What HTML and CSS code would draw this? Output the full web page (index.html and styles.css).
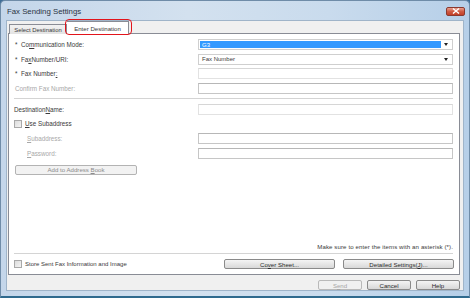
FILE: index.html
```html
<!DOCTYPE html>
<html lang="en">

<head>
    <meta charset="UTF-8">
    <title>Fax Sending Settings</title>
    <link rel="stylesheet" href="styles.css">
</head>

<body>
    <div class="window">
        <div class="titlebar">
            <span class="title">Fax Sending Settings</span>
            <span class="close-btn">
                <svg width="8" height="6" viewBox="0 0 8 6">
                    <path d="M1 0.5 L7 5.5 M7 0.5 L1 5.5" stroke="#fff" stroke-width="1.4" />
                </svg>
            </span>
        </div>

        <div class="client">
            <div class="tabs">
                <div class="tab">Select Destination</div>
                <div class="tab active">Enter Destination</div>
                <div class="highlight"></div>
            </div>

            <div class="panel">
                <div class="row">
                    <label class="label"><span class="star">*</span>Co<u>m</u>munication Mode:</label>
                    <div class="combo selected">
                        <span class="combo-value">G3</span>
                        <span class="arrow"></span>
                    </div>
                </div>
                <div class="row">
                    <label class="label"><span class="star">*</span>Fa<u>x</u> Number/URI:</label>
                    <div class="combo">
                        <span class="combo-value">Fax Number</span>
                        <span class="arrow"></span>
                    </div>
                </div>
                <div class="row">
                    <label class="label"><span class="star">*</span>Fax Number<u>:</u></label>
                    <div class="textbox faint"></div>
                </div>
                <div class="row">
                    <label class="label disabled">Confirm Fax Number:</label>
                    <div class="textbox"></div>
                </div>

                <div class="separator"></div>

                <div class="row">
                    <label class="label plain">Destination <u>N</u>ame:</label>
                    <div class="textbox faint"></div>
                </div>
                <div class="check-row">
                    <span class="checkbox"></span>
                    <span><u>U</u>se Subaddress</span>
                </div>
                <div class="row">
                    <label class="label disabled indent"><u>S</u>ubaddress:</label>
                    <div class="textbox"></div>
                </div>
                <div class="row">
                    <label class="label disabled indent"><u>P</u>assword:</label>
                    <div class="textbox"></div>
                </div>
                <button class="btn add-btn">Add to Address <u>B</u>ook</button>

                <div class="spacer"></div>

                <p class="note">Make sure to enter the items with an asterisk (*).</p>
                <div class="separator bottom"></div>

                <div class="panel-foot">
                    <div class="check-row">
                        <span class="checkbox"></span>
                        <span>Store Sent Fax Information and Image</span>
                    </div>
                    <button class="btn wide">Co<u>v</u>er Sheet...</button>
                    <button class="btn wide">Detailed Settings(<u>J</u>)...</button>
                </div>
            </div>

            <div class="footer">
                <button class="btn small" disabled>S<u>e</u>nd</button>
                <button class="btn small">Cancel</button>
                <button class="btn small">Help</button>
            </div>
        </div>
    </div>
</body>

</html>
```

FILE: styles.css
```css
* {
    margin: 0;
    padding: 0;
    box-sizing: border-box;
}

body {
    width: 470px;
    height: 298px;
    overflow: hidden;
    font-family: "Liberation Sans", Arial, sans-serif;
    font-size: 6.3px;
    color: #3a3a3a;
    background: #3f6e98;
}

.window {
    width: 470px;
    height: 298px;
    display: flex;
    flex-direction: column;
    background: linear-gradient(90deg, #c4d6ea, #d3e1ef 40%, #c9dbed 70%, #b6cfe8);
    border: 1px solid #6f8ca8;
    border-bottom: 2px solid #2f6a8e;
    border-radius: 5px 5px 0 0;
}

/* title bar */
.titlebar {
    height: 19px;
    display: flex;
    align-items: center;
    justify-content: space-between;
    padding: 1px 4px 0 6px;
}

.title {
    font-size: 7.8px;
    color: #2a3442;
}

.close-btn {
    width: 19px;
    height: 9px;
    display: flex;
    align-items: center;
    justify-content: center;
    border: 1px solid #8a3a30;
    border-radius: 2px;
    background: linear-gradient(#e8a08f, #cf5a43 50%, #c24028);
}

/* client area */
.client {
    flex: 1;
    margin: 0 5px 5px;
    background: #f0f0f0;
    border: 1px solid #9fb4c9;
    display: flex;
    flex-direction: column;
    padding: 0 3px 0 1px;
}

.tabs {
    position: relative;
    height: 13px;
    display: flex;
    align-items: flex-end;
    padding-left: 1px;
    margin-bottom: -1px;
    z-index: 2;
}

.tab {
    width: 58px;
    height: 10px;
    display: flex;
    align-items: center;
    justify-content: center;
    border: 1px solid #898c95;
    border-bottom: none;
    background: linear-gradient(#f2f2f2, #e3e3e3);
    font-size: 5.9px;
    white-space: nowrap;
}

.tab.active {
    width: 62px;
    height: 13px;
    background: #fff;
    border-left: none;
    font-size: 6.1px;
}

/* red annotation ring around the active tab */
.highlight {
    position: absolute;
    left: 57px;
    top: -2px;
    width: 67px;
    height: 16px;
    border: 1.5px solid #e2141b;
    border-radius: 4px;
}

.panel {
    height: 242px;
    background: #fff;
    border: 1px solid #898c95;
    display: flex;
    flex-direction: column;
    padding: 5px 5px 0 5px;
}

.row {
    display: flex;
    align-items: center;
    height: 11px;
    margin-bottom: 3.7px;
}

.label {
    width: 184px;
    padding-left: 1px;
    display: flex;
    align-items: center;
}

.label.plain {
    padding-left: 0;
}

.label.indent {
    padding-left: 13px;
}

.star {
    width: 6px;
}

.disabled {
    color: #a8a8a8;
}

.combo {
    width: 255px;
    height: 11px;
    border: 1px solid #cfcfcf;
    display: flex;
    align-items: center;
    padding: 1px;
}

.combo-value {
    flex: 1;
    height: 100%;
    display: flex;
    align-items: center;
    padding-left: 2px;
    font-size: 6px;
}

.combo.selected .combo-value {
    background: #3399ff;
    color: #fff;
}

.arrow {
    width: 10px;
    display: flex;
    justify-content: center;
}

.arrow::after {
    content: "";
    border-left: 2.5px solid transparent;
    border-right: 2.5px solid transparent;
    border-top: 3px solid #222;
}

.textbox {
    width: 255px;
    height: 11px;
    border: 1px solid #c6c6c6;
    border-top-color: #b7b7b7;
    background: #fff;
}

.textbox.faint {
    border-color: #e2e2e2;
    border-top-color: #d6d6d6;
}

.separator {
    height: 1px;
    background: #d4d4d4;
    margin: 0 0 5px 0;
    width: 439px;
}

.check-row {
    display: flex;
    align-items: center;
    gap: 3px;
    height: 9px;
    margin: 1px 0 5px;
}

.checkbox {
    width: 8px;
    height: 8px;
    border: 1px solid #a9a9a9;
    background: linear-gradient(135deg, #dcdcdc, #f4f4f4);
}

.btn {
    font-family: inherit;
    font-size: 6.1px;
    color: #2a2a2a;
    height: 10px;
    border: 1px solid #8a8a8a;
    border-radius: 2px;
    background: linear-gradient(#f4f4f4, #e6e6e6 50%, #d8d8d8);
}

.btn:disabled {
    color: #a6a6a6;
    border-color: #b9b9b9;
    background: #f0f0f0;
}

.add-btn {
    width: 122px;
    margin: 2px 0 0 1px;
    border-color: #b3b3b3;
    color: #8c8c8c;
    background: #f2f2f2;
}

.spacer {
    flex: 1;
}

.note {
    text-align: right;
    width: 439px;
    font-size: 6.1px;
    letter-spacing: 0.1px;
    margin-bottom: 3px;
}

.separator.bottom {
    margin-bottom: 5px;
}

.panel-foot {
    display: flex;
    align-items: center;
    height: 10px;
    margin-bottom: 5px;
}

.panel-foot .check-row {
    margin: 0;
    flex: 1;
    font-size: 6px;
}

.btn.wide {
    width: 111px;
    margin-left: 8px;
}

.btn.wide:first-of-type {
    margin-left: 0;
}

.footer {
    display: flex;
    justify-content: flex-end;
    gap: 5px;
    padding-top: 5px;
}

.btn.small {
    width: 44px;
}
```
